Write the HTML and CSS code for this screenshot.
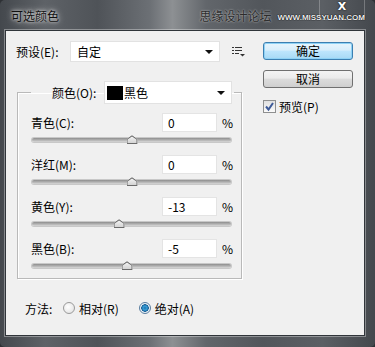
FILE: index.html
```html
<!DOCTYPE html>
<html>
<head>
    <meta charset="utf-8">
    <title>可选颜色</title>
    <link rel="stylesheet" href="styles.css">
</head>
<body>
    <div class="window">
        <div class="titlebar">
            <span class="title">可选颜色</span>
            <span class="watermark">思缘设计论坛</span>
            <span class="site">WWW.MISSYUAN.COM</span>
            <span class="close">X</span>
        </div>

        <div class="client">
            <div class="main">
                <div class="preset-row">
                    <label class="preset-label">预设(E):</label>
                    <div class="select preset-select">
                        <span>自定</span>
                        <i class="arrow"></i>
                    </div>
                    <svg class="menu-icon" width="13" height="10" viewBox="0 0 13 10">
                        <rect x="0" y="0" width="2" height="1" fill="#333"/>
                        <rect x="3" y="0" width="7" height="1" fill="#333"/>
                        <rect x="0" y="3" width="2" height="1" fill="#333"/>
                        <rect x="3" y="3" width="7" height="1" fill="#333"/>
                        <rect x="0" y="6" width="2" height="1" fill="#333"/>
                        <rect x="3" y="6" width="4" height="1" fill="#333"/>
                        <path d="M8 7 L13 7 L10.5 9.5 Z" fill="#333"/>
                    </svg>
                </div>

                <fieldset class="group">
                    <legend class="group-head">
                        <label class="color-label">颜色(O):</label>
                        <div class="select color-select">
                            <span class="swatch"></span>
                            <span>黑色</span>
                            <i class="arrow"></i>
                        </div>
                    </legend>

                    <div class="slider-row">
                        <div class="slider-top">
                            <label class="slider-label">青色(C):</label>
                            <div class="num">0</div>
                            <span class="pct">%</span>
                        </div>
                        <div class="track"><i class="thumb" style="left: 50%"></i></div>
                    </div>

                    <div class="slider-row">
                        <div class="slider-top">
                            <label class="slider-label">洋红(M):</label>
                            <div class="num">0</div>
                            <span class="pct">%</span>
                        </div>
                        <div class="track"><i class="thumb" style="left: 50%"></i></div>
                    </div>

                    <div class="slider-row">
                        <div class="slider-top">
                            <label class="slider-label">黄色(Y):</label>
                            <div class="num">-13</div>
                            <span class="pct">%</span>
                        </div>
                        <div class="track"><i class="thumb" style="left: 43.5%"></i></div>
                    </div>

                    <div class="slider-row">
                        <div class="slider-top">
                            <label class="slider-label">黑色(B):</label>
                            <div class="num">-5</div>
                            <span class="pct">%</span>
                        </div>
                        <div class="track"><i class="thumb" style="left: 47.5%"></i></div>
                    </div>
                </fieldset>

                <div class="method">
                    <span class="method-label">方法:</span>
                    <span class="radio"></span>
                    <span class="radio-text">相对(R)</span>
                    <span class="radio checked"></span>
                    <span class="radio-text">绝对(A)</span>
                </div>
            </div>

            <div class="side">
                <div class="btn btn-default">确定</div>
                <div class="btn">取消</div>
                <label class="check">
                    <span class="box">
                        <svg width="11" height="11" viewBox="0 0 11 11">
                            <path d="M2 5.5 L4.5 8.5 L9 2" fill="none" stroke="#3d5a98" stroke-width="2"/>
                        </svg>
                    </span>
                    预览(P)
                </label>
            </div>
        </div>
    </div>
</body>
</html>
```

FILE: styles.css
```css
* {
    box-sizing: border-box;
}

body {
    margin: 0;
    background: #2e3135;
    font-family: "Noto Sans CJK SC", "DejaVu Sans", sans-serif;
    font-size: 12px;
    color: #000;
}

.window {
    width: 375px;
    height: 347px;
    display: flex;
    flex-direction: column;
    padding: 0 10px 11px 5px;
    border-radius: 5px;
    background: linear-gradient(90deg, #44484d 0%, #5e6267 12%, #4f5358 26%, #6c7075 40%, #8d9093 46%, #62666b 55%, #52565b 70%, #5b5f64 86%, #44484d 100%);
}

/* title bar */
.titlebar {
    height: 30px;
    display: flex;
    align-items: center;
    position: relative;
}

.title {
    margin-left: 2px;
    padding: 0 4px;
    font-size: 12px;
    color: #111;
    text-shadow: 0 0 6px #e4e4e4, 0 0 3px #e4e4e4;
}

.watermark {
    margin-left: auto;
    font-size: 12px;
    color: #2c2c2c;
    text-shadow: 0 0 2px #d8d8d8;
}

.site {
    margin: 5px 0 0 6px;
    font-family: "Liberation Sans", sans-serif;
    font-size: 8px;
    font-weight: bold;
    color: #ececec;
    text-shadow: 0 0 1px #000, 0 0 1px #000;
}

.close {
    position: absolute;
    top: 0;
    right: 0;
    width: 46px;
    height: 20px;
    text-align: center;
    line-height: 13px;
    font-family: "DejaVu Sans", sans-serif;
    font-size: 11px;
    font-weight: bold;
    color: #fff;
    text-shadow: 0 0 2px #000;
    border: 1px solid rgba(255, 255, 255, 0.25);
    border-top: none;
    border-radius: 0 0 4px 4px;
}

/* client area */
.client {
    flex: 1;
    display: flex;
    background: #f0f0f0;
    border: 1px solid #30353a;
    box-shadow: 0 0 0 1px rgba(255, 255, 255, 0.35);
}

.main {
    width: 245px;
}

.preset-row {
    display: flex;
    align-items: center;
    height: 21px;
    margin-top: 10px;
    padding-left: 10px;
}

.preset-label {
    width: 54px;
}

.select {
    display: flex;
    align-items: center;
    background: #fff;
    border: 1px solid #e2e2e2;
    padding-left: 6px;
    position: relative;
}

.preset-select {
    width: 150px;
    height: 21px;
}

.arrow {
    margin-left: auto;
    margin-right: 6px;
    width: 0;
    height: 0;
    border-left: 4px solid transparent;
    border-right: 4px solid transparent;
    border-top: 4px solid #111;
}

.menu-icon {
    margin-left: 12px;
    margin-top: 1px;
}

/* group box */
.group {
    margin: 19px 0 0 11px;
    width: 225px;
    padding: 0 0 10px 0;
    border: 1px solid #b9b9b9;
    box-shadow: inset 1px 1px 0 #fff, 1px 1px 0 #fff;
}

.group-head {
    display: flex;
    align-items: center;
    margin-left: 13px;
    padding: 0 2px 0 21px;
}

.color-label {
    width: 52px;
}

.color-select {
    width: 128px;
    height: 23px;
    padding-left: 2px;
}

.swatch {
    width: 16px;
    height: 14px;
    background: #000;
    margin-right: 1px;
}

.slider-row {
    padding-left: 13px;
    margin-top: 13px;
}

.slider-row:first-of-type {
    margin-top: 9px;
}

.slider-top {
    display: flex;
    align-items: center;
    height: 19px;
}

.slider-label {
    width: 131px;
}

.num {
    width: 55px;
    height: 19px;
    line-height: 18px;
    padding-left: 5px;
    background: #fff;
    border: 1px solid #e4e4e4;
}

.pct {
    margin-left: 5px;
}

.track {
    position: relative;
    width: 199px;
    height: 4px;
    margin: 6px 0 0 1px;
    border-radius: 2px;
    background: linear-gradient(#8e8e8e, #b8b8b8 60%, #d8d8d8);
    box-shadow: 0 0 0 1px #c8c8c8;
}

.thumb {
    position: absolute;
    top: -3px;
    width: 11px;
    height: 9px;
    margin-left: -5px;
    background: linear-gradient(#fafafa, #cfcfcf);
    clip-path: polygon(50% 0, 100% 45%, 100% 100%, 0 100%, 0 45%);
}

.thumb::after {
    content: "";
    position: absolute;
    inset: 0;
    background: #6b6b6b;
    clip-path: polygon(50% 0, 100% 45%, 100% 100%, 0 100%, 0 45%, 1px 45%, 1px calc(100% - 1px), calc(100% - 1px) calc(100% - 1px), calc(100% - 1px) 50%, 50% 1.5px, 1px 50%, 0 45%);
}

/* method */
.method {
    display: flex;
    align-items: center;
    height: 16px;
    margin-top: 21px;
    padding-left: 19px;
}

.method-label {
    width: 38px;
}

.radio {
    width: 12px;
    height: 12px;
    border-radius: 50%;
    border: 1px solid #9a9a9a;
    background: radial-gradient(circle at 40% 40%, #fff, #dedede);
    margin-right: 4px;
}

.radio.checked {
    margin-left: 20px;
    border-color: #5a7ea0;
    background: radial-gradient(circle, #1f6fae 0, #38a0d8 2px, #145c94 3.5px, #e6eef5 4px, #f4f7fa 100%);
}

/* side buttons */
.side {
    padding: 11px 0 0 12px;
}

.btn {
    width: 90px;
    height: 18px;
    line-height: 16px;
    text-align: center;
    font-size: 12px;
    border: 1px solid #707070;
    border-radius: 3px;
    background: linear-gradient(#f4f4f4 0%, #ebebeb 45%, #dcdcdc 50%, #cfcfcf 100%);
    margin-bottom: 10px;
}

.btn-default {
    border-color: #3c7fb1;
    background: linear-gradient(#e8f5fd 0%, #d8eefb 45%, #bee6fd 50%, #a7d9f5 100%);
    box-shadow: inset 0 0 0 1px #8fd2f5;
}

.check {
    display: flex;
    align-items: center;
    margin-top: 7px;
}

.box {
    width: 13px;
    height: 13px;
    border: 1px solid #8e8f8f;
    background: linear-gradient(#e0e0e0, #fafafa);
    margin-right: 3px;
    display: flex;
    align-items: center;
    justify-content: center;
}
```
